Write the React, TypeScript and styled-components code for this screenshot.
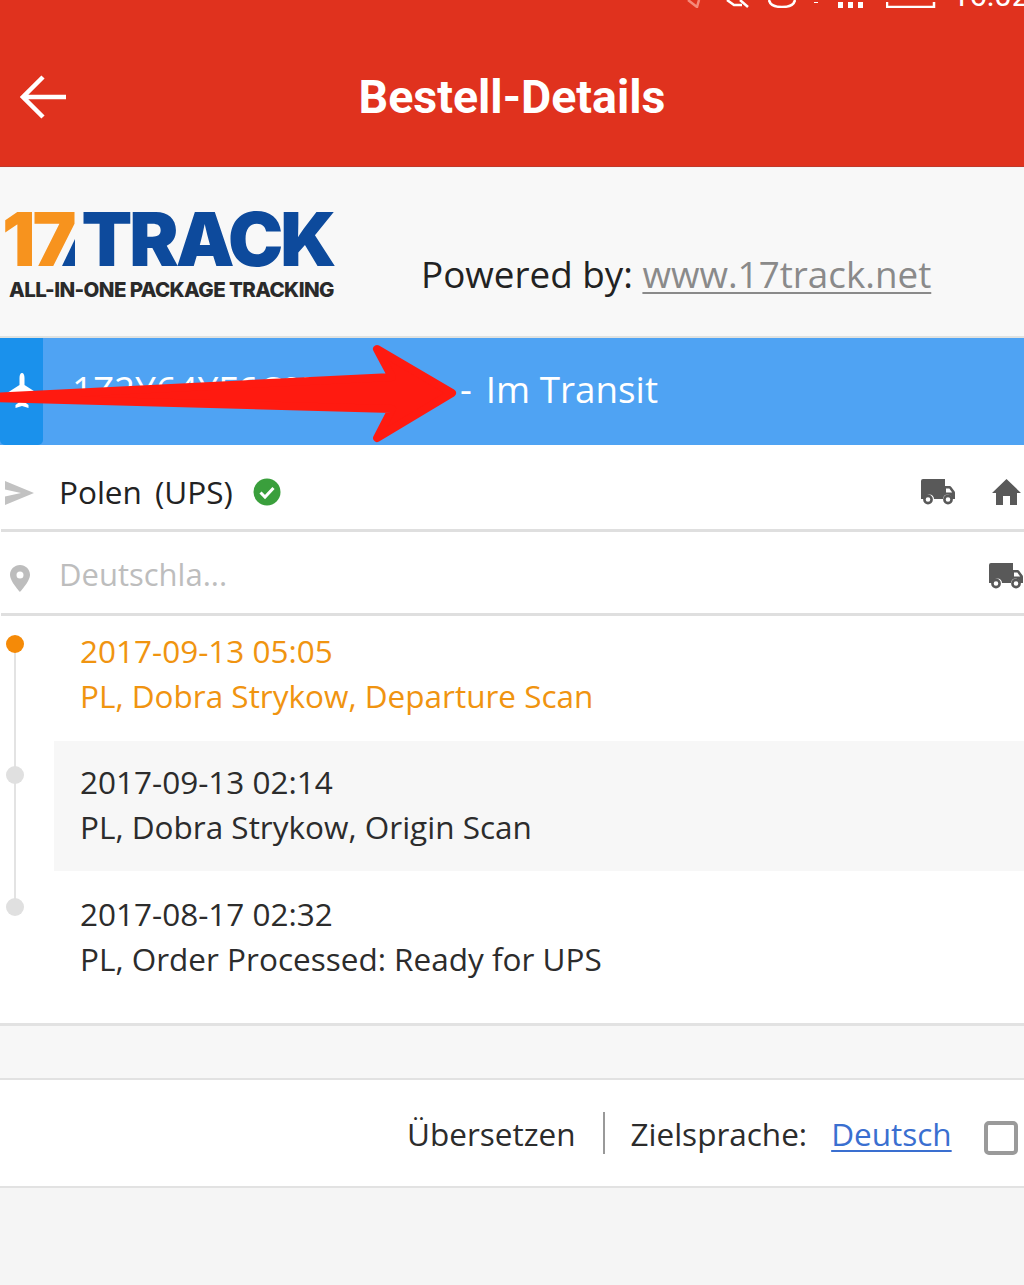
import styled, { createGlobalStyle } from 'styled-components'

const GlobalStyle = createGlobalStyle`
  html, body {
    margin: 0;
    padding: 0;
    background: #f5f5f5;
  }
  body {
    font-family: "Open Sans", "Noto Sans", "Liberation Sans", sans-serif;
    color: #222;
  }
`

const Page = styled.div`
  position: relative;
  width: 1024px;
  height: 1285px;
  overflow: hidden;
  background: #f5f5f5;
`

const Header = styled.header`
  height: 166px;
  background: #e0321e;
  border-bottom: 1px solid #c0392b;
  display: flex;
  flex-direction: column;
`

const StatusBar = styled.div`
  height: 8px;
  overflow: hidden;
  display: flex;
  justify-content: flex-end;
  align-items: flex-end;
  gap: 16px;
  color: #fff;
`

const StatusTime = styled.span`
  font: 400 31px/31px Roboto, sans-serif;
  width: 72px;
  white-space: nowrap;
  flex: none;
  margin-bottom: -3px;
`

const TitleBar = styled.div`
  flex: 1;
  display: flex;
  align-items: center;
  justify-content: center;
  position: relative;
  padding-top: 20px;
`

const BackButton = styled.svg`
  position: absolute;
  left: 20px;
  top: 67px;
`

const Title = styled.h1`
  margin: 0;
  font: 700 46.500px/1 Roboto, sans-serif;
  color: #fff;
`

const BrandRow = styled.section`
  height: 168px;
  margin-top: 1px;
  background: #f8f8f8;
  border-bottom: 2px solid #e0e2e0;
  display: flex;
  padding-left: 2px;
`

const Logo = styled.div`
  position: relative;
  width: 333px;
  padding-top: 42px;
  flex: none;
`

const LogoMark = styled.div`
  font: 900 74px/58px Inter, "Liberation Sans", sans-serif;
  letter-spacing: -3px;
  color: #0d4a9c;
  white-space: nowrap;
`

const LogoNumber = styled.span`
  color: #f7931e;
  letter-spacing: -3px;
  margin-right: 8px;
`

const LogoSlash = styled.svg`
  position: absolute;
  left: 60px;
  top: 71px;
`

const LogoTagline = styled.div`
  font: 800 20.500px/24px Inter, "Liberation Sans", sans-serif;
  letter-spacing: -0.6px;
  color: #2a2a2a;
  padding-left: 7px;
  margin-top: 10px;
  white-space: nowrap;
`

const Powered = styled.div`
  margin-left: 86px;
  padding-top: 83px;
  font-size: 36.800px;
  line-height: 46px;
  color: #222;
  white-space: nowrap;
`

const PoweredLink = styled.a`
  color: #8a8a8a;
  text-decoration: underline;
  text-decoration-thickness: 2px;
  text-underline-offset: 4px;
`

const TrackBar = styled.section`
  height: 107px;
  box-sizing: border-box;
  background: #4fa3f3;
  display: flex;
  align-items: center;
  color: #fff;
  font-size: 36.800px;
  white-space: nowrap;
`

const PlaneTab = styled.div`
  width: 43px;
  height: 100%;
  background: #1a91ec;
  border-radius: 0 0 5px 5px;
  display: flex;
  align-items: center;
  justify-content: center;
  margin-right: 29px;
  flex: none;
`

const TrackText = styled.div`
  display: flex;
  margin-top: -5px;
`

const TrackNumber = styled.span`
  width: 376px;
  flex: none;
  margin-right: 12px;
`

const TrackDash = styled.span`
  margin-right: 14px;
`

const Arrow = styled.svg`
  position: absolute;
  left: 0;
  top: 340px;
  pointer-events: none;
`

const RouteRow = styled.div<{ $height: number; $pad: number }>`
  height: ${p => p.$height}px;
  box-sizing: border-box;
  padding-top: ${p => p.$pad}px;
  margin-left: 1px;
  background: #fff;
  border-bottom: 3px solid #dfdfdf;
  display: flex;
  align-items: center;
  font-size: 31.500px;
`

const RouteSlot = styled.div`
  width: 59px;
  margin-left: -1px;
  padding-left: 5px;
  box-sizing: border-box;
  display: flex;
  align-items: center;
  flex: none;
`

const SendIcon = styled.svg`
  margin-top: 2px;
`

const PinIcon = styled.svg`
  margin: 6px 0 0 5px;
`

const Country = styled.span<{ $muted?: boolean }>`
  color: ${p => (p.$muted ? '#bdbdbd' : '#222')};
  font-size: ${p => (p.$muted ? 31 : 31.5)}px;
  margin: ${p => (p.$muted ? '-4px 20px 0 0' : '0 20px 0 0')};
  word-spacing: 5px;
`

const RouteIcons = styled.div<{ $inset: number }>`
  margin-left: auto;
  display: flex;
  align-items: center;
  gap: 37px;
  padding-right: ${p => p.$inset}px;
`

const RouteWrap = styled.div`
  background: #fff;
`

const Timeline = styled.ul`
  list-style: none;
  margin: 0;
  padding: 0 0 0 54px;
  height: 407px;
  background: #fff;
  border-bottom: 3px solid #e2e2e2;
`

const Event = styled.li<{
  $height: number
  $pad: number
  $shaded?: boolean
  $current?: boolean
  $last?: boolean
}>`
  position: relative;
  height: ${p => p.$height}px;
  box-sizing: border-box;
  padding: ${p => p.$pad}px 0 0 26px;
  font-size: 31.500px;
  line-height: 45px;
  white-space: nowrap;
  background: ${p => (p.$shaded ? '#f7f7f7' : '#fff')};
  color: ${p => (p.$current ? '#f09410' : '#2c2c2c')};

  &::before {
    content: '';
    position: absolute;
    left: -40px;
    top: ${p => p.$pad + 16}px;
    width: 2px;
    height: ${p => (p.$last ? 0 : 131)}px;
    background: #e3e3e3;
  }

  &::after {
    content: '';
    position: absolute;
    left: -48px;
    top: ${p => p.$pad + 7}px;
    width: 18px;
    height: 18px;
    border-radius: 50%;
    background: ${p => (p.$current ? '#f58a07' : '#e0e0e0')};
  }
`

const Spacer = styled.div`
  height: 52px;
  background: #f7f7f7;
  border-bottom: 2px solid #e2e2e2;
`

const TranslateRow = styled.div`
  height: 108px;
  background: #fff;
  border-bottom: 2px solid #e2e2e2;
  display: flex;
  align-items: center;
  padding-left: 407px;
  font-size: 31.500px;
  color: #2c2c2c;
  white-space: nowrap;
  box-sizing: border-box;
`

const Divider = styled.span`
  width: 2px;
  height: 42px;
  background: #999;
  margin: 0 26px 0 27px;
  flex: none;
`

const LanguageLink = styled.a`
  color: #3a6fd0;
  margin-left: 24px;
  text-decoration: underline;
  text-decoration-thickness: 2px;
  text-underline-offset: 4px;
`

const CheckBox = styled.span`
  width: 34px;
  height: 34px;
  box-sizing: border-box;
  border: 4px solid #9a9a9a;
  border-radius: 5px;
  margin-left: 32px;
  margin-top: 10px;
  flex: none;
`

const Truck = ({ color = '#595959' }: { color?: string }) => (
  <svg width="34" height="26" viewBox="0 0 34 26">
    <path fill={color} d="M2 0h22v7h4.500c.8 0 1.400.3 1.800 1l3 4c.4.5.7 1 .7 1.800V20h-3a4.500 4.500 0 0 0-9 0h-9a4.500 4.500 0 0 0-9 0H0V2a2 2 0 0 1 2-2z" />
    <path fill="#fff" d="M25 9.500h3.300l2.900 4H25z" />
    <circle cx="7" cy="20.500" r="3.600" fill="#fff" stroke={color} strokeWidth="2.600" />
    <circle cx="27" cy="20.500" r="3.600" fill="#fff" stroke={color} strokeWidth="2.600" />
  </svg>
)

const Home = () => (
  <svg width="29" height="26" viewBox="0 0 29 26">
    <path fill="#595959" d="M14.500 0 29 14h-4v12h-7v-9h-7v9H4V14H0z" />
  </svg>
)

export default function App() {
  return (
    <Page>
      <GlobalStyle />
      <Header>
        <StatusBar>
          <svg width="24" height="8" viewBox="0 0 24 8">
            <path d="M2 0l9 7 2-7" fill="none" stroke="#f58a7a" strokeWidth="2.500" />
          </svg>
          <svg width="26" height="8" viewBox="0 0 26 8">
            <path d="M1 0l7 5h8M14 0l8 7" fill="none" stroke="#fff" strokeWidth="2.500" />
          </svg>
          <svg width="28" height="8" viewBox="0 0 28 8">
            <path d="M1 0c1 5 6 7 13 7s12-2 13-7" fill="none" stroke="#fff" strokeWidth="2.500" />
          </svg>
          <svg width="58" height="6" viewBox="0 0 58 6">
            <path d="M2 0h4v1H2zM26 0h5v6h-5zM36 0h5v6h-5zM46 0h5v6h-5z" fill="#fff" />
          </svg>
          <svg width="50" height="6" viewBox="0 0 50 6">
            <path d="M1 0v5h47V0" fill="none" stroke="#fff" strokeWidth="2.500" />
          </svg>
          <StatusTime>16:02</StatusTime>
        </StatusBar>
        <TitleBar>
          <BackButton width="48" height="44" viewBox="0 0 48 44">
            <path d="M46 22H4M23 2 3 22l20 20" fill="none" stroke="#fff" strokeWidth="4.500" />
          </BackButton>
          <Title>Bestell-Details</Title>
        </TitleBar>
      </Header>

      <BrandRow>
        <Logo>
          <LogoMark>
            <LogoNumber>17</LogoNumber>TRACK
          </LogoMark>
          <LogoSlash width="16" height="27" viewBox="0 0 16 27">
            <path d="M0 27 13 0v27z" fill="#0d4a9c" />
          </LogoSlash>
          <LogoTagline>ALL-IN-ONE PACKAGE TRACKING</LogoTagline>
        </Logo>
        <Powered>
          Powered by: <PoweredLink>www.17track.net</PoweredLink>
        </Powered>
      </BrandRow>

      <TrackBar>
        <PlaneTab>
          <svg width="30" height="38" viewBox="0 0 30 38">
            <path fill="#fff" d="M15 0c1.600 0 2.500 2 2.500 5v7L30 20v3l-12.500-4v10l4 3v3L15 33l-6.500 2v-3l4-3V19L0 23v-3l12.500-8V5c0-3 .9-5 2.500-5z" />
          </svg>
        </PlaneTab>
        <TrackText>
          <TrackNumber>1Z2Y64YF6C9725134</TrackNumber>
          <TrackDash>-</TrackDash>Im Transit
        </TrackText>
      </TrackBar>

      <RouteWrap>
        <RouteRow $height={87} $pad={9}>
          <RouteSlot>
            <SendIcon width="29" height="24" viewBox="0 0 29 24">
              <path fill="#c2c2c2" d="M0 0l29 12L0 24v-8.500L16 12 0 8.500z" />
            </SendIcon>
          </RouteSlot>
          <Country>Polen (UPS)</Country>
          <svg width="28" height="28" viewBox="0 0 28 28">
            <circle cx="14" cy="14" r="13.500" fill="#3a9f3c" />
            <path d="M7.500 14.500l4.500 4.500 8.500-9" fill="none" stroke="#fff" strokeWidth="3" />
          </svg>
          <RouteIcons $inset={3}>
            <Truck />
            <Home />
          </RouteIcons>
        </RouteRow>
        <RouteRow $height={84} $pad={6}>
          <RouteSlot>
            <PinIcon width="20" height="27" viewBox="0 0 20 27">
              <path fill="#bdbdbd" fillRule="evenodd" d="M10 0c5.500 0 10 4.400 10 9.800C20 16.500 10 27 10 27S0 16.500 0 9.800C0 4.400 4.500 0 10 0zm0 6.500a3.500 3.500 0 1 0 0 7 3.500 3.500 0 0 0 0-7z" />
            </PinIcon>
          </RouteSlot>
          <Country $muted>Deutschla...</Country>
          <RouteIcons $inset={1}>
            <Truck />
          </RouteIcons>
        </RouteRow>
      </RouteWrap>

      <Timeline>
        <Event $current $height={125} $pad={12}>
          2017-09-13 05:05
          <br />
          PL, Dobra Strykow, Departure Scan
        </Event>
        <Event $shaded $height={130} $pad={18}>
          2017-09-13 02:14
          <br />
          PL, Dobra Strykow, Origin Scan
        </Event>
        <Event $last $height={131} $pad={20}>
          2017-08-17 02:32
          <br />
          PL, Order Processed: Ready for UPS
        </Event>
      </Timeline>

      <Spacer />

      <TranslateRow>
        Übersetzen
        <Divider />
        Zielsprache:
        <LanguageLink>Deutsch</LanguageLink>
        <CheckBox />
      </TranslateRow>

      <Arrow width="470" height="110" viewBox="0 0 470 110">
        <path
          fill="#ff1a10"
          stroke="#ff1a10"
          strokeWidth="8"
          strokeLinejoin="round"
          d="M-10 57 392 37 377 9 452 53 377 98 392 69-10 58z"
        />
      </Arrow>
    </Page>
  )
}
